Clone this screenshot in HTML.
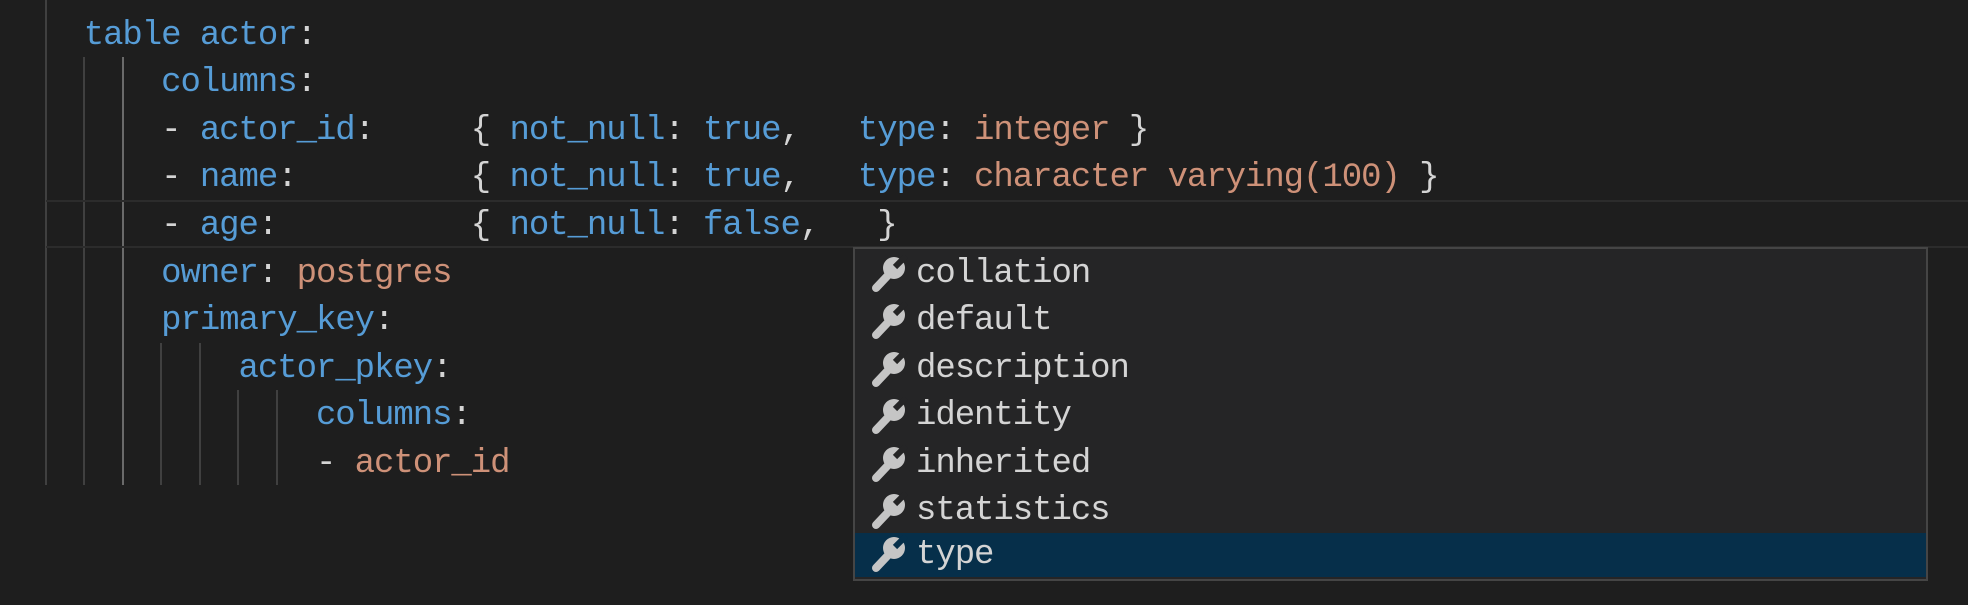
<!DOCTYPE html>
<html><head><meta charset="utf-8"><style>
html,body{margin:0;padding:0;background:#1e1e1e;width:1968px;height:605px;overflow:hidden;position:relative}
.ln{position:absolute;left:45px;height:47.6px;line-height:47.6px;white-space:pre;color:#d4d4d4;font-family:"Liberation Mono",monospace;font-size:34px;letter-spacing:-1.05px;margin-top:3px}
.k{color:#569cd6}.s{color:#ce9178}.p{color:#d4d4d4}
.g{position:absolute;width:2px;background:#404040}
.cur{position:absolute;left:46px;right:0;top:200px;height:44px;border-top:2px solid #2c2c2c;border-bottom:2px solid #2c2c2c}
.pop{position:absolute;left:853px;top:247px;width:1071px;height:330px;background:#252526;border:2px solid #454545}
.it{position:absolute;left:0;right:0;height:47.4px;line-height:47.4px;font-family:"Liberation Mono",monospace;font-size:34px;letter-spacing:-1.05px;color:#d4d4d4;white-space:pre}
.it svg{position:absolute;left:14px;top:4px}
.it span{position:absolute;left:61px}
.sel{background:#062f4a}
</style></head><body>
<div class="g" style="left:45px;top:0;height:485px"></div>
<div class="g" style="left:83px;top:57px;height:428px"></div>
<div class="g" style="left:122px;top:57px;height:428px;background:#6a6a6a"></div>
<div class="g" style="left:160px;top:343px;height:142px"></div>
<div class="g" style="left:199px;top:343px;height:142px"></div>
<div class="g" style="left:237px;top:390px;height:95px"></div>
<div class="g" style="left:276px;top:390px;height:95px"></div>
<div class="cur"></div>

<div class="ln" style="top:9.5px">  <span class="k">table actor</span>:</div>
<div class="ln" style="top:57.1px">      <span class="k">columns</span>:</div>
<div class="ln" style="top:104.7px">      - <span class="k">actor_id</span>:     { <span class="k">not_null</span>: <span class="k">true</span>,   <span class="k">type</span>: <span class="s">integer</span> }</div>
<div class="ln" style="top:152.3px">      - <span class="k">name</span>:         { <span class="k">not_null</span>: <span class="k">true</span>,   <span class="k">type</span>: <span class="s">character varying(100)</span> }</div>
<div class="ln" style="top:199.9px">      - <span class="k">age</span>:          { <span class="k">not_null</span>: <span class="k">false</span>,   }</div>
<div class="ln" style="top:247.5px">      <span class="k">owner</span>: <span class="s">postgres</span></div>
<div class="ln" style="top:295.1px">      <span class="k">primary_key</span>:</div>
<div class="ln" style="top:342.7px">          <span class="k">actor_pkey</span>:</div>
<div class="ln" style="top:390.3px">              <span class="k">columns</span>:</div>
<div class="ln" style="top:437.9px">              - <span class="s">actor_id</span></div>

<div class="pop">
<div class="it" style="top:2px"><svg width="40" height="40" viewBox="0 0 40 40"><line x1="24" y1="15" x2="7" y2="33" stroke="#c5c5c5" stroke-width="8" stroke-linecap="round"/><circle cx="25" cy="13" r="11" fill="#c5c5c5"/><line x1="26" y1="12" x2="37" y2="1" stroke="#252526" stroke-width="6"/></svg><span>collation</span></div>
<div class="it" style="top:49.4px"><svg width="40" height="40" viewBox="0 0 40 40"><line x1="24" y1="15" x2="7" y2="33" stroke="#c5c5c5" stroke-width="8" stroke-linecap="round"/><circle cx="25" cy="13" r="11" fill="#c5c5c5"/><line x1="26" y1="12" x2="37" y2="1" stroke="#252526" stroke-width="6"/></svg><span>default</span></div>
<div class="it" style="top:96.8px"><svg width="40" height="40" viewBox="0 0 40 40"><line x1="24" y1="15" x2="7" y2="33" stroke="#c5c5c5" stroke-width="8" stroke-linecap="round"/><circle cx="25" cy="13" r="11" fill="#c5c5c5"/><line x1="26" y1="12" x2="37" y2="1" stroke="#252526" stroke-width="6"/></svg><span>description</span></div>
<div class="it" style="top:144.2px"><svg width="40" height="40" viewBox="0 0 40 40"><line x1="24" y1="15" x2="7" y2="33" stroke="#c5c5c5" stroke-width="8" stroke-linecap="round"/><circle cx="25" cy="13" r="11" fill="#c5c5c5"/><line x1="26" y1="12" x2="37" y2="1" stroke="#252526" stroke-width="6"/></svg><span>identity</span></div>
<div class="it" style="top:191.6px"><svg width="40" height="40" viewBox="0 0 40 40"><line x1="24" y1="15" x2="7" y2="33" stroke="#c5c5c5" stroke-width="8" stroke-linecap="round"/><circle cx="25" cy="13" r="11" fill="#c5c5c5"/><line x1="26" y1="12" x2="37" y2="1" stroke="#252526" stroke-width="6"/></svg><span>inherited</span></div>
<div class="it" style="top:239px"><svg width="40" height="40" viewBox="0 0 40 40"><line x1="24" y1="15" x2="7" y2="33" stroke="#c5c5c5" stroke-width="8" stroke-linecap="round"/><circle cx="25" cy="13" r="11" fill="#c5c5c5"/><line x1="26" y1="12" x2="37" y2="1" stroke="#252526" stroke-width="6"/></svg><span>statistics</span></div>
<div class="it sel" style="top:284px;height:44px;line-height:44px"><svg width="40" height="40" viewBox="0 0 40 40" style="top:2px"><line x1="24" y1="15" x2="7" y2="33" stroke="#c5c5c5" stroke-width="8" stroke-linecap="round"/><circle cx="25" cy="13" r="11" fill="#c5c5c5"/><line x1="26" y1="12" x2="37" y2="1" stroke="#062f4a" stroke-width="6"/></svg><span>type</span></div>
</div>
</body></html>
